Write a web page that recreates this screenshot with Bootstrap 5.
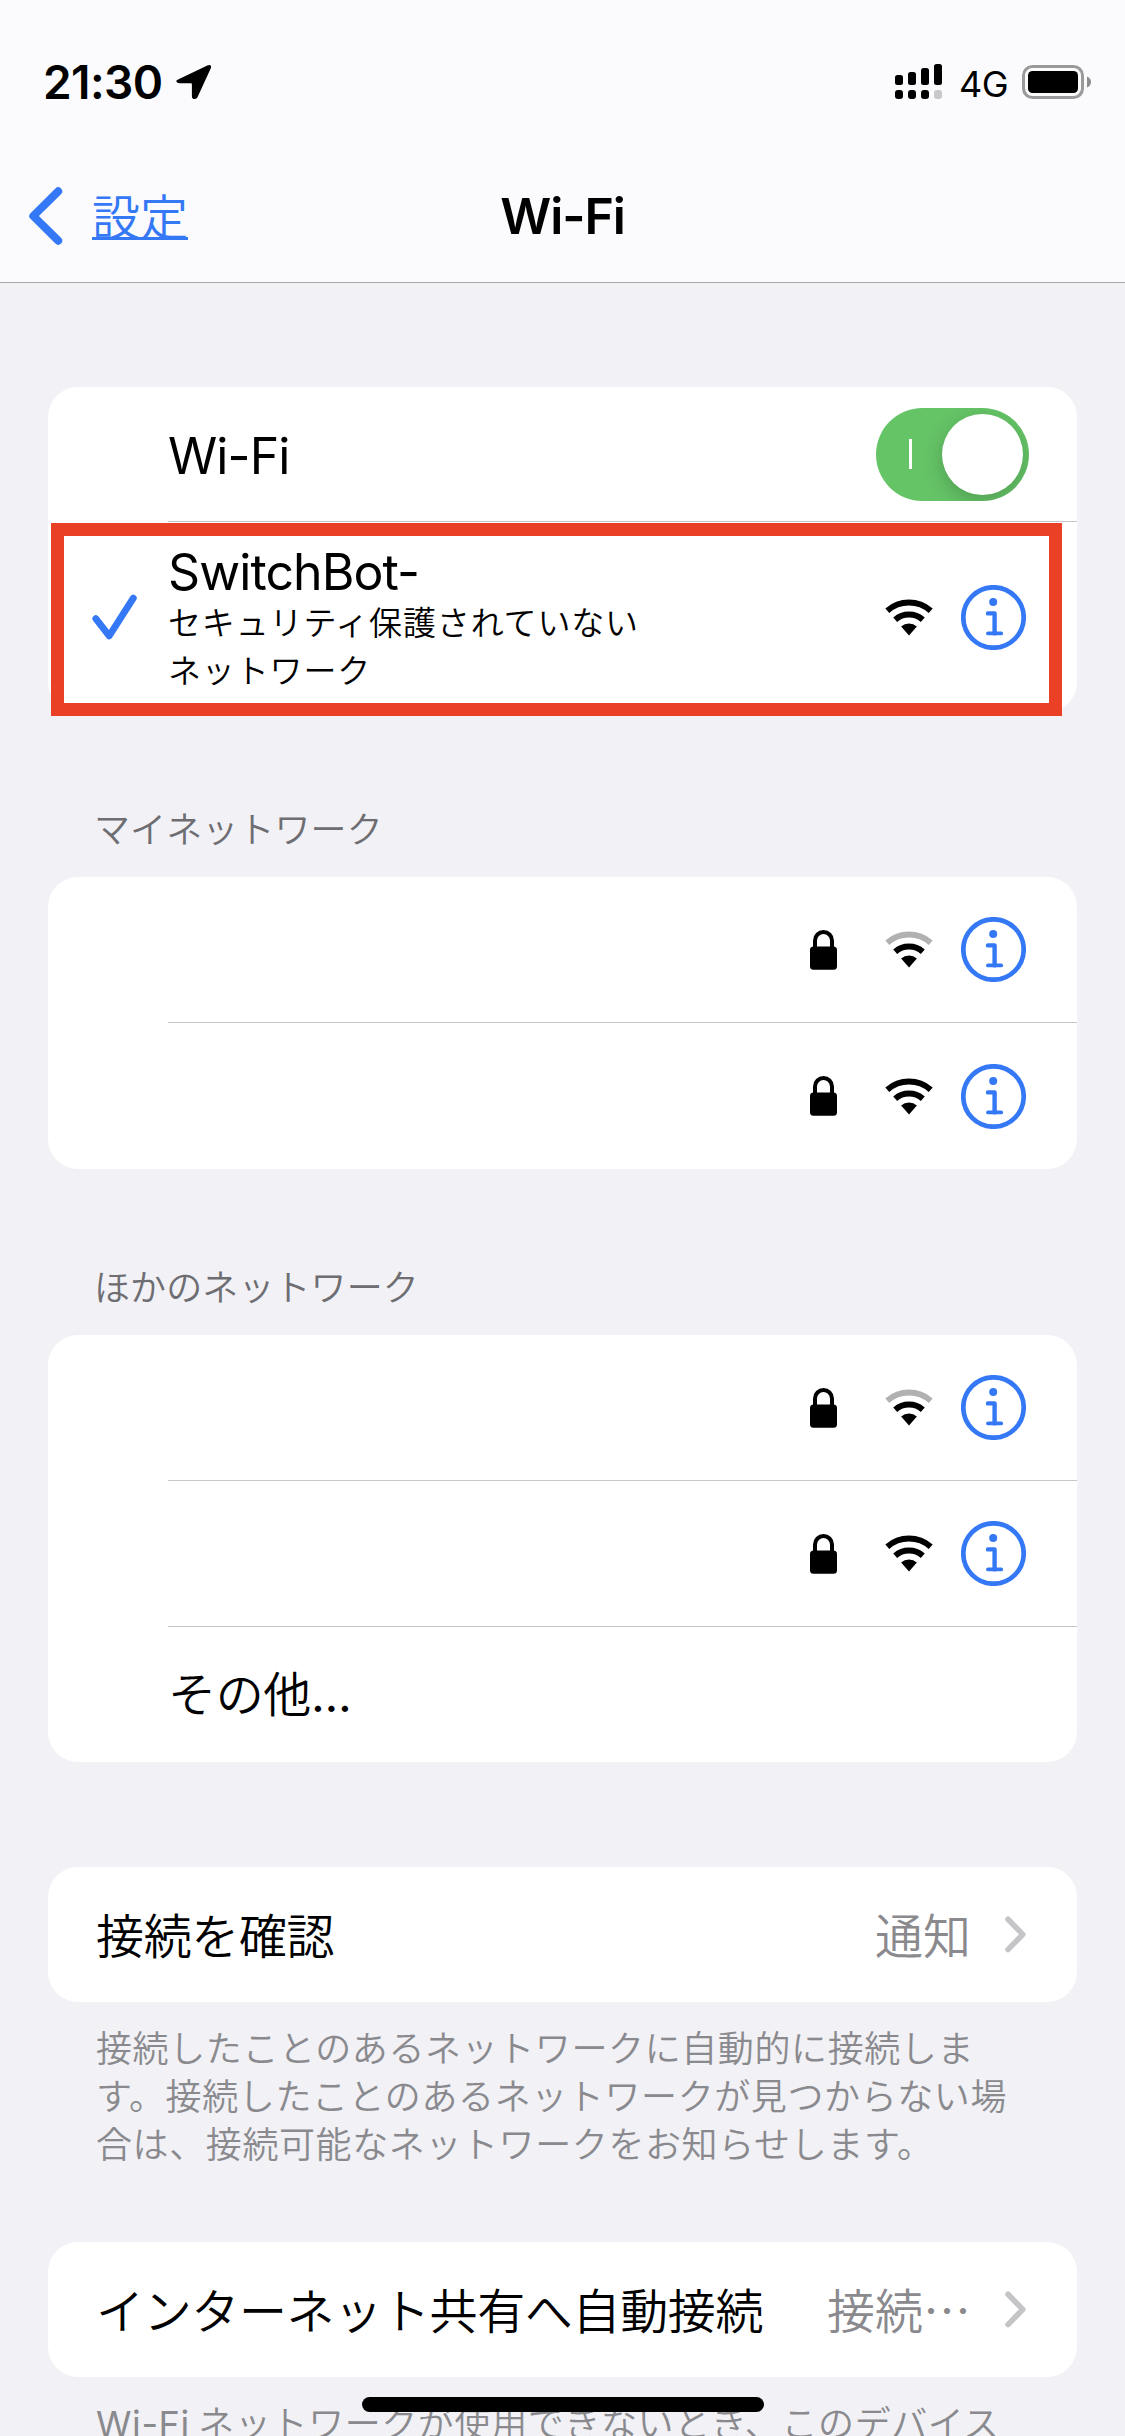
<!DOCTYPE html>
<html lang="ja">
<head>
<meta charset="utf-8">
<meta name="viewport" content="width=device-width, initial-scale=1">
<title>Wi-Fi</title>
<link rel="stylesheet" href="https://cdn.jsdelivr.net/npm/bootstrap@5.3.0/dist/css/bootstrap.min.css">
<style>
  :root { --ios-blue: #3478f6; --ios-gray: #8a8a8e; --ios-line: #c6c6c8; }
  html, body { width: 1125px; height: 2436px; overflow: hidden; }
  body { background: #f1f1f6; color: #000; font-family: "Noto Sans CJK JP", sans-serif; font-size: 48px; line-height: 60px; font-weight: 350; }
  svg { display: block; flex: none; }
  .latin { font-family: Inter, "Noto Sans CJK JP", sans-serif; font-weight: 400; }
  .top-area { height: 283px; background: #fbfbfd; border-bottom: 1px solid #a9a9ac; }
  .status-bar { height: 149px; padding: 15px 34px 0 43px; }
  .clock { font-size: 46px; font-weight: 600; letter-spacing: -.6px; }
  .net-type { font-size: 36px; letter-spacing: -.6px; }
  .title-bar { height: 133px; padding: 0 29px; }
  .title-bar > div { flex: 1 1 0; }
  .back-link, .back-link:hover { color: var(--ios-blue); text-decoration: none; }
  .back-text { border-bottom: 3px solid var(--ios-blue); line-height: 46px; height: 49px; margin-top: -1px; }
  .page-title { font-size: 50px; font-weight: 600; letter-spacing: -1.1px; }
  .settings { padding: 0 48px; }
  .group { background: #fff; border-radius: 30px; }
  .line-row { display: flex; height: 135px; }
  .line-row.tall { height: 146px; }
  .line-row.current { height: 190px; }
  .lead-slot { width: 120px; flex: none; display: flex; align-items: center; }
  .row-body { flex: 1; display: flex; align-items: center; padding-right: 51px; min-width: 0; }
  .line-row:has(+ .line-row) .row-body { border-bottom: 1px solid var(--ios-line); }
  .row-text { font-size: 50px; letter-spacing: -.9px; }
  .row-label { letter-spacing: -.35px; padding-bottom: 3px; }
  .sub-text { font-size: 33px; line-height: 48px; letter-spacing: .85px; }
  .group-head { font-size: 36px; line-height: 48px; font-weight: 350; color: #6d6d72; padding-left: 46px; letter-spacing: .1px; margin: 91px 0 26px; }
  .group-foot { font-size: 36px; line-height: 48px; color: var(--ios-gray); padding-left: 48px; letter-spacing: .6px; margin-top: 20px; white-space: nowrap; }
  .plain-row { height: 135px; padding: 0 51px 0 48px; display: flex; align-items: center; }
  .row-value { color: var(--ios-gray); padding-bottom: 3px; }
  .switch-track { width: 153px; height: 93px; border-radius: 47px; background: #65c466; padding: 6px; overflow: hidden; }
  .switch-tick { width: 3px; height: 30px; background: #fff; margin-left: 27px; }
  .switch-knob { width: 81px; height: 81px; border-radius: 50%; background: #fff; box-shadow: 0 6px 20px rgba(0,0,0,.2); }
  .highlight { position: absolute; left: 3px; top: 136px; width: 1011px; height: 193px; border: 13px solid #ea4025; pointer-events: none; }
  .home-bar { position: absolute; left: 362px; top: 2397px; width: 402px; height: 15px; border-radius: 8px; background: #000; }
</style>
</head>
<body>
<svg width="0" height="0" class="position-absolute" aria-hidden="true">
  <defs>
    <symbol id="wifi-inner" viewBox="0 0 48 37">
      <path d="M10.2 20.7A21 21 0 0 1 37.8 20.7" fill="none" stroke="#000" stroke-width="6"/>
      <path d="M24 36.5L16.1 27.5A12 12 0 0 1 31.9 27.5Z"/>
    </symbol>
    <symbol id="wifi-outer" viewBox="0 0 48 37">
      <path d="M2.3 11.7A33 33 0 0 1 45.7 11.7" fill="none" stroke="currentColor" stroke-width="6"/>
    </symbol>
    <symbol id="lock" viewBox="0 0 27 40">
      <path d="M5 18V10.5a8.5 8.5 0 0 1 17 0V18" fill="none" stroke="#000" stroke-width="4"/>
      <rect x="0" y="16.5" width="27" height="23.2" rx="3.5"/>
    </symbol>
    <symbol id="info" viewBox="0 0 65 65">
      <g fill="none" stroke="#3478f6" stroke-linecap="round" stroke-linejoin="round">
        <circle cx="32.5" cy="32.5" r="30.2" stroke-width="4.7"/>
        <path d="M27 28.4H33.6V48.4" stroke-width="4.4"/>
        <path d="M27 48.4H40.2" stroke-width="3.8"/>
      </g>
      <circle cx="32.2" cy="17" r="4" fill="#3478f6"/>
    </symbol>
    <symbol id="chev" viewBox="0 0 21 37">
      <path d="M3 3.2L17.8 18.4L3 33.6" fill="none" stroke="#c5c5c7" stroke-width="5.6" stroke-linecap="round" stroke-linejoin="round"/>
    </symbol>
  </defs>
</svg>

<header class="top-area">
  <div class="status-bar d-flex align-items-center latin">
    <span class="clock">21:30</span>
    <svg width="36" height="36" viewBox="0 0 36 36" style="margin-left:14px"><path d="M2.6 15.2L31.3 1.4Q36.2 -.2 34.8 4.2L21.6 33Q20.6 35.2 18.6 35.1Q15.9 34.9 15.9 32.2V20.4Q15.9 19.3 14.8 19.3H3.2Q.4 19.2 .2 17.1Q.2 16.1 2.6 15.2Z"/></svg>
    <svg class="ms-auto" width="48" height="36" viewBox="0 0 48 36">
      <rect x="0" y="11" width="8" height="10" rx="2.5"/><rect x="13" y="8" width="8" height="13" rx="2.5"/><rect x="26" y="4" width="8" height="17" rx="2.5"/><rect x="39" y="0" width="8" height="21" rx="2.5"/>
      <rect x="0" y="26" width="8" height="9" rx="3"/><rect x="13" y="26" width="8" height="9" rx="3"/><rect x="26" y="26" width="8" height="9" rx="3"/><rect x="39" y="26" width="8" height="9" rx="3" fill="#c8c8ca"/>
    </svg>
    <span class="net-type pt-1" style="margin:0 14px 0 16px">4G</span>
    <svg width="69" height="34" viewBox="0 0 69 34"><rect x="1.5" y="1.5" width="59" height="31" rx="9" fill="none" stroke="#9a9a9b" stroke-width="3"/><rect x="6" y="6" width="50" height="22" rx="4.5"/><path d="M65 11.5Q69 13 69 17T65 22.5Z" fill="#8e8e8f"/></svg>
  </div>
  <nav class="title-bar d-flex align-items-center">
    <div>
      <a href="#" class="back-link d-flex align-items-center">
        <svg width="34" height="58" viewBox="0 0 34 58"><path d="M29.2 4.3L4.3 29L29.2 53.7" fill="none" stroke="#3478f6" stroke-width="8" stroke-linecap="round" stroke-linejoin="round"/></svg>
        <span class="back-text" style="margin-left:29px">設定</span>
      </a>
    </div>
    <h1 class="page-title latin m-0">Wi-Fi</h1>
    <div></div>
  </nav>
</header>

<main class="settings">
  <div class="group position-relative" style="margin-top:104px">
    <div class="line-row">
      <div class="lead-slot"></div>
      <div class="row-body" style="padding-right:48px">
        <span class="row-text latin" style="padding-top:3px">Wi-Fi</span>
        <div class="switch-track ms-auto d-flex align-items-center justify-content-between"><span class="switch-tick"></span><span class="switch-knob"></span></div>
      </div>
    </div>
    <div class="line-row current">
      <div class="lead-slot"><svg width="46" height="46" viewBox="0 0 46 46" style="margin-left:44px"><path d="M3.8 24.6L17.2 41.8L41.3 4.2" fill="none" stroke="#3478f6" stroke-width="6.8" stroke-linecap="round" stroke-linejoin="round"/></svg></div>
      <div class="row-body">
        <div style="padding-top:6px">
          <div class="row-text latin" style="line-height:50px">SwitchBot-</div>
          <div class="sub-text">セキュリティ保護されていない<br>ネットワーク</div>
        </div>
        <svg class="ms-auto" width="48" height="37"><use href="#wifi-inner"/><use href="#wifi-outer"/></svg>
        <svg width="65" height="65" style="margin-left:28px"><use href="#info"/></svg>
      </div>
    </div>
    <div class="highlight"></div>
  </div>

  <h2 class="group-head">マイネットワーク</h2>
  <div class="group">
    <div class="line-row tall"><div class="lead-slot"></div><div class="row-body justify-content-end">
      <svg width="27" height="40"><use href="#lock"/></svg>
      <svg width="48" height="37" style="margin-left:48px"><use href="#wifi-inner"/><use href="#wifi-outer" color="#b1b1b1"/></svg>
      <svg width="65" height="65" style="margin-left:28px"><use href="#info"/></svg>
    </div></div>
    <div class="line-row tall"><div class="lead-slot"></div><div class="row-body justify-content-end">
      <svg width="27" height="40"><use href="#lock"/></svg>
      <svg width="48" height="37" style="margin-left:48px"><use href="#wifi-inner"/><use href="#wifi-outer"/></svg>
      <svg width="65" height="65" style="margin-left:28px"><use href="#info"/></svg>
    </div></div>
  </div>

  <h2 class="group-head" style="margin-top:92px">ほかのネットワーク</h2>
  <div class="group">
    <div class="line-row tall"><div class="lead-slot"></div><div class="row-body justify-content-end">
      <svg width="27" height="40"><use href="#lock"/></svg>
      <svg width="48" height="37" style="margin-left:48px"><use href="#wifi-inner"/><use href="#wifi-outer" color="#b1b1b1"/></svg>
      <svg width="65" height="65" style="margin-left:28px"><use href="#info"/></svg>
    </div></div>
    <div class="line-row tall"><div class="lead-slot"></div><div class="row-body justify-content-end">
      <svg width="27" height="40"><use href="#lock"/></svg>
      <svg width="48" height="37" style="margin-left:48px"><use href="#wifi-inner"/><use href="#wifi-outer"/></svg>
      <svg width="65" height="65" style="margin-left:28px"><use href="#info"/></svg>
    </div></div>
    <div class="line-row"><div class="lead-slot"></div><div class="row-body"><span class="row-label">その他<span class="latin">...</span></span></div></div>
  </div>

  <div class="group plain-row" style="margin-top:105px">
    <span class="row-label">接続を確認</span>
    <span class="row-value ms-auto">通知</span>
    <svg width="21" height="37" style="margin-left:34px"><use href="#chev"/></svg>
  </div>
  <p class="group-foot mb-0">接続したことのあるネットワークに自動的に接続しま<br>す。接続したことのあるネットワークが見つからない場<br>合は、接続可能なネットワークをお知らせします。</p>

  <div class="group plain-row" style="margin-top:76px">
    <span class="row-label">インターネット共有へ自動接続</span>
    <span class="row-value ms-auto">接続…</span>
    <svg width="21" height="37" style="margin-left:34px"><use href="#chev"/></svg>
  </div>
  <p class="group-foot mb-0"><span class="latin">Wi-Fi</span> ネットワークが使用できないとき、このデバイス</p>
</main>
<div class="home-bar"></div>
<script src="https://cdn.jsdelivr.net/npm/bootstrap@5.3.0/dist/js/bootstrap.bundle.min.js"></script>
</body>
</html>
